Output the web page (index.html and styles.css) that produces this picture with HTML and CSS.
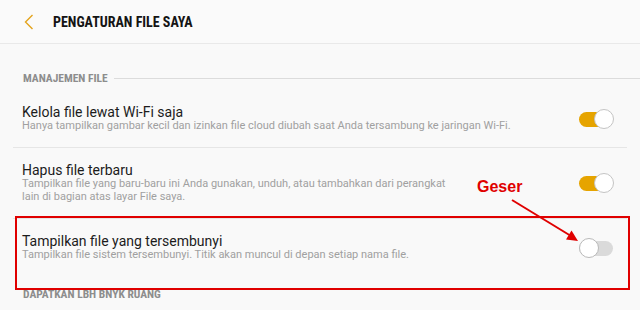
FILE: index.html
```html
<!DOCTYPE html>
<html lang="id">
<head>
    <meta charset="UTF-8">
    <meta name="viewport" content="width=device-width, initial-scale=1.0">
    <title>Pengaturan File Saya</title>
    <link rel="stylesheet" href="styles.css">
</head>
<body>
    <header class="topbar">
        <svg class="back" width="10" height="16" viewBox="0 0 10 16">
            <path d="M8.5 1 L1.5 8 L8.5 15" fill="none" stroke="#e3a31c" stroke-width="1.4"/>
        </svg>
        <h1>PENGATURAN FILE SAYA</h1>
    </header>
    <main class="page">
        <div class="section-label">
            <span>MANAJEMEN FILE</span>
            <span class="rule"></span>
        </div>
        <div class="item divided">
            <div class="item-text">
                <div class="item-title">Kelola file lewat Wi-Fi saja</div>
                <div class="item-desc">Hanya tampilkan gambar kecil dan izinkan file cloud diubah saat Anda tersambung ke jaringan Wi-Fi.</div>
            </div>
            <span class="switch on"><span class="knob"></span></span>
        </div>
        <div class="item divided">
            <div class="item-text">
                <div class="item-title">Hapus file terbaru</div>
                <div class="item-desc">Tampilkan file yang baru-baru ini Anda gunakan, unduh, atau tambahkan dari perangkat<br>lain di bagian atas layar File saya.</div>
            </div>
            <span class="switch on"><span class="knob"></span></span>
        </div>
        <div class="item">
            <div class="item-text">
                <div class="item-title">Tampilkan file yang tersembunyi</div>
                <div class="item-desc">Tampilkan file sistem tersembunyi. Titik akan muncul di depan setiap nama file.</div>
            </div>
            <span class="switch"><span class="knob"></span></span>
        </div>
        <div class="section-label next">
            <span>DAPATKAN LBH BNYK RUANG</span>
        </div>
    </main>

    <!-- annotation drawn over the screenshot -->
    <div class="mark-box"></div>
    <div class="mark-text">Geser</div>
    <svg class="mark-arrow" width="640" height="310" viewBox="0 0 640 310">
        <line x1="512" y1="200" x2="571" y2="236" stroke="#e00000" stroke-width="2"/>
        <polygon points="578,241 566,239.5 571.5,230.5" fill="#e00000"/>
    </svg>
</body>
</html>
```

FILE: styles.css
```css
body {
    margin: 0;
    background-color: #f9f9f9;
    font-family: Roboto, 'Noto Sans', sans-serif;
    color: #1f1f1f;
    height: 310px;
    overflow: hidden;
    position: relative;
}

.topbar {
    height: 43px;
    display: flex;
    align-items: center;
    padding-left: 24px;
    border-bottom: 1px solid #e9e9e9;
    background-color: #fafafa;
}

.back {
    margin-top: 1px;
}

.topbar h1 {
    margin: 0 0 0 19px;
    font-family: 'Roboto Condensed', 'Liberation Sans Narrow', Roboto, sans-serif;
    font-size: 14px;
    font-weight: bold;
    color: #141414;
}

.page {
    padding: 0 13px;
}

.section-label {
    display: flex;
    align-items: center;
    height: 14px;
    margin: 27px -13px 5px 0;
    padding-left: 10px;
    font-family: 'Roboto Condensed', 'Liberation Sans Narrow', Roboto, sans-serif;
    font-size: 11.5px;
    font-weight: bold;
    color: #8d8d8d;
    line-height: 14px;
}

.section-label.next {
    margin-top: 11px;
}

.section-label .rule {
    flex: 1;
    height: 1px;
    margin-left: 6px;
    background-color: #dcdcdc;
}

.item {
    display: flex;
    align-items: center;
    padding: 14px 13px 14px 9px;
}

.item.divided {
    border-bottom: 1px solid #e6e6e6;
}

.item-text {
    flex: 1;
}

.item-title {
    font-size: 14px;
    line-height: 16px;
    color: #1c1c1c;
}

.item-desc {
    font-size: 11px;
    line-height: 13px;
    color: #a0a0a0;
    margin-top: -1px;
    padding-bottom: 1px;
}

.switch {
    position: relative;
    width: 35px;
    height: 20px;
    flex-shrink: 0;
}

.switch::before {
    content: "";
    position: absolute;
    left: 0;
    right: 1px;
    top: 3px;
    height: 15px;
    border-radius: 8px;
    background-color: #dadada;
}

.switch.on::before {
    background-color: #e6a400;
}

.knob {
    position: absolute;
    top: 0;
    left: 0;
    width: 18px;
    height: 18px;
    border-radius: 50%;
    background-color: #fff;
    border: 1px solid #b9b9b9;
}

.switch.on .knob {
    left: auto;
    right: 0;
    border-color: #c4c4c4;
}

.mark-box {
    position: absolute;
    left: 15px;
    top: 216px;
    width: 611px;
    height: 70px;
    border: 2px solid #e00000;
}

.mark-text {
    position: absolute;
    left: 477px;
    top: 178px;
    font-family: 'Liberation Sans', Arial, sans-serif;
    font-size: 16px;
    font-weight: bold;
    color: #e00000;
}

.mark-arrow {
    position: absolute;
    left: 0;
    top: 0;
}
```
